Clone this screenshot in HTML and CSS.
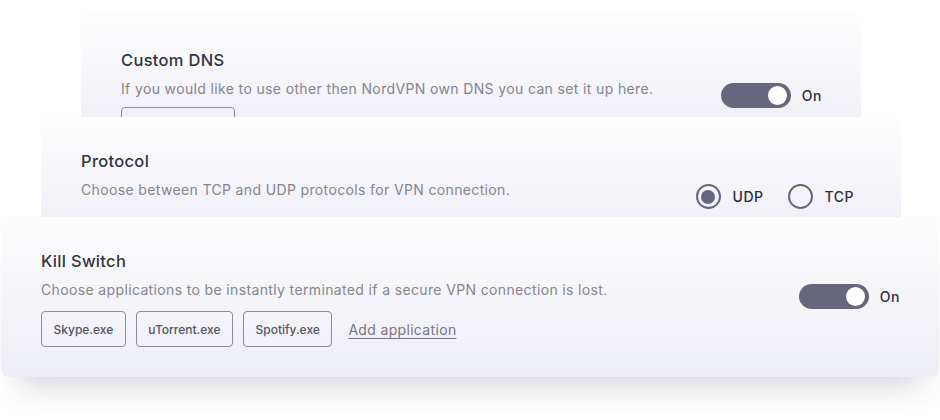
FILE: index.html
```html
<!DOCTYPE html>
<html>
<head>
<meta charset="utf-8">
<link rel="stylesheet" href="styles.css">
</head>
<body>
<div class="stack">
  <section class="card card-dns">
    <div class="info">
      <h3 class="title">Custom DNS</h3>
      <p class="desc">If you would like to use other then NordVPN own DNS you can set it up here.</p>
      <div class="apps"><span class="chip chip-wide"></span></div>
    </div>
    <div class="control">
      <span class="toggle"><span class="knob"></span></span>
      <span class="label">On</span>
    </div>
  </section>
  <section class="card card-proto">
    <div class="info">
      <h3 class="title">Protocol</h3>
      <p class="desc">Choose between TCP and UDP protocols for VPN connection.</p>
    </div>
    <div class="control radios">
      <span class="radio-item"><span class="radio checked"></span><span class="label">UDP</span></span>
      <span class="radio-item"><span class="radio"></span><span class="label">TCP</span></span>
    </div>
  </section>
  <section class="card card-kill">
    <div class="info">
      <h3 class="title">Kill Switch</h3>
      <p class="desc">Choose applications to be instantly terminated if a secure VPN connection is lost.</p>
      <div class="apps">
        <span class="chip">Skype.exe</span>
        <span class="chip">uTorrent.exe</span>
        <span class="chip">Spotify.exe</span>
        <a class="add" href="#">Add application</a>
      </div>
    </div>
    <div class="control">
      <span class="toggle"><span class="knob"></span></span>
      <span class="label">On</span>
    </div>
  </section>
</div>
</body>
</html>
```

FILE: styles.css
```css
* { box-sizing: border-box; }
html, body { margin: 0; padding: 0; background: #ffffff; }
body {
  width: 940px;
  height: 420px;
  overflow: hidden;
  font-family: Inter, "Noto Sans", sans-serif;
  color: #34343f;
}
.stack {
  display: flex;
  flex-direction: column;
  padding-top: 16px;
}
.card {
  position: relative;
  display: flex;
  justify-content: space-between;
  align-items: flex-start;
  padding: 32px 40px 0 40px;
  background: linear-gradient(180deg, #fefeff 0%, #f0f0f7 100%);
  overflow: hidden;
}
.card-dns {
  margin: 0 79px 0 81px;
  height: 101px;
  border-radius: 8px 8px 0 0;
  z-index: 1;
  box-shadow: 0 -3px 8px -4px rgba(60, 60, 90, 0.06);
}
.card-proto {
  margin: 0 39px 0 41px;
  height: 100px;
  z-index: 2;
  padding-right: 48px;
}
.card-kill {
  margin: 0 1px 0 1px;
  height: 160px;
  z-index: 3;
  overflow: visible;
  border-radius: 0 0 8px 8px;
  background: linear-gradient(180deg, #fdfdfe 0%, #ededf5 100%);
  box-shadow: 0 26px 30px -18px rgba(50, 50, 80, 0.22);
}
.title {
  margin: 0;
  font-size: 16.5px;
  line-height: 24px;
  font-weight: 500;
  letter-spacing: 0.3px;
  color: #34343f;
}
.desc {
  margin: 7px 0 0 0;
  font-size: 14px;
  line-height: 20px;
  font-weight: 400;
  letter-spacing: 0.36px;
  color: #85858e;
}
.apps {
  display: flex;
  align-items: center;
  gap: 10px;
  margin-top: 11px;
}
.card-dns .apps { margin-top: 8px; }
.chip {
  display: inline-flex;
  align-items: center;
  height: 36px;
  padding: 0 11.5px;
  border: 1px solid #8d8d96;
  border-radius: 4px;
  font-size: 12px;
  font-weight: 500;
  color: #55555f;
}
.chip-wide { width: 114px; }
.add {
  margin-left: 6px;
  font-size: 14px;
  letter-spacing: 0.33px;
  color: #767680;
  text-decoration: underline;
  text-underline-offset: 3px;
}
.control {
  display: flex;
  align-items: center;
  margin-top: 35px;
  margin-right: -1px;
}
.toggle {
  position: relative;
  display: inline-block;
  width: 70px;
  height: 25px;
  border-radius: 13px;
  background: #67667f;
}
.knob {
  position: absolute;
  right: 4px;
  top: 3px;
  width: 19px;
  height: 19px;
  border-radius: 50%;
  background: #ffffff;
}
.label {
  font-size: 14px;
  font-weight: 500;
  letter-spacing: 0.5px;
  color: #2f2f3a;
}
.toggle + .label { margin-left: 11px; }
.radios { gap: 24px; }
.radio-item {
  display: flex;
  align-items: center;
  gap: 12px;
}
.radio {
  position: relative;
  display: inline-block;
  width: 25px;
  height: 25px;
  border: 2px solid #67667f;
  border-radius: 50%;
}
.radio.checked::after {
  content: "";
  position: absolute;
  left: 3.5px;
  top: 3.5px;
  width: 14px;
  height: 14px;
  border-radius: 50%;
  background: #67667f;
}
```
